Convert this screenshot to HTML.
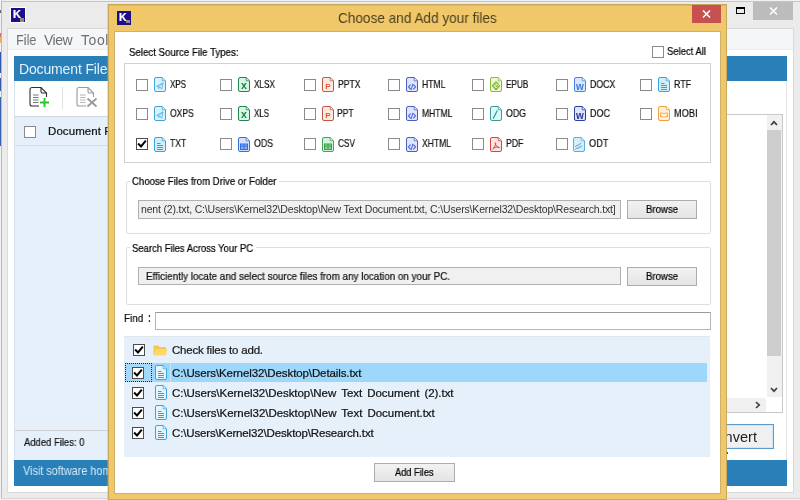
<!DOCTYPE html>
<html><head><meta charset="utf-8"><title>Choose and Add your files</title>
<style>
*{box-sizing:border-box;margin:0;padding:0}
html,body{width:800px;height:500px;overflow:hidden;background:#fff}
body{position:relative;font-family:"Liberation Sans",sans-serif;color:#000}
.a{position:absolute}
.t{position:absolute;white-space:pre;line-height:1;will-change:transform;-webkit-text-stroke:.22px currentColor}
.ic{position:absolute;overflow:visible;will-change:transform}
.cb{position:absolute;width:12px;height:12px;border:1px solid #8a8a8a;background:#fff}
.cb.dk{border-color:#4d4d4d}
.btn{position:absolute;border:1px solid #acacac;background:linear-gradient(#f2f2f2,#e4e4e4)}
.gb{position:absolute;border:1px solid #dedede;border-radius:2px}
.wh{position:absolute;background:#fff;height:4px}
</style></head><body>

<div class="a" style="left:1px;top:0;width:799px;height:500px;background:#ebebeb;border-left:1px solid #b9b9b9;border-top:1px solid #f0f0f0"></div>
<div class="a" style="left:1px;top:1px;width:799px;height:1px;background:#c6c6c6"></div>
<div class="a" style="left:1px;top:498px;width:799px;height:1px;background:#d6d6d6"></div><div class="a" style="left:1px;top:499px;width:799px;height:1px;background:#f4f4f4"></div>
<div class="a" style="left:0;top:0;width:1px;height:500px;background:#f2f2f2"></div><div class="a" style="left:0;top:10px;width:1px;height:3px;background:#666"></div><div class="a" style="left:0;top:33px;width:1px;height:4px;background:#d86a6a"></div><div class="a" style="left:0;top:37px;width:1px;height:6px;background:#e6b65e"></div><div class="a" style="left:0;top:52px;width:1px;height:21px;background:#3258a8"></div><div class="a" style="left:0;top:78px;width:1px;height:13px;background:#3258a8"></div><div class="a" style="left:0;top:97px;width:1px;height:49px;background:#3a62b0"></div>
<div class="a" style="left:10px;top:7px;width:16px;height:16px;background:#1b0f8e;border:1px solid #fff"><span class="t" id="t_k1" style="left:2px;top:1px;font-size:11px;font-weight:bold;color:#fff">K</span><span class="a" style="left:9px;top:10px;width:4px;height:4px;background:#b9a27a;opacity:.8"></span></div>
<svg class="a" style="left:736px;top:7px" width="9" height="7" viewBox="0 0 9 7"><rect x=".5" y=".5" width="8" height="6" fill="none" stroke="#000"/><rect x="0" y="0" width="9" height="2" fill="#000"/></svg>
<div class="a" style="left:753px;top:2px;width:40px;height:18px;background:#bcbcbc"></div>
<svg class="a" style="left:769px;top:7px" width="9" height="8" viewBox="0 0 9 8"><path d="M1 .5L8 7.5M8 .5L1 7.5" stroke="#fff" stroke-width="1.5"/></svg>
<div class="a" style="left:7px;top:28px;width:787px;height:465px;background:#fff;border:1px solid #dadada"></div>
<div class="a" style="left:8px;top:29px;width:785px;height:21px;background:#f5f6f7;border-bottom:1px solid #ececec"></div>
<span class="t" id="t_file" style="left:15.70px;top:32.65px;font-size:14px;color:#6e6e6e;transform:scaleX(0.9006);transform-origin:0 0;-webkit-text-stroke:0;">File</span>
<span class="t" id="t_view" style="left:44.20px;top:32.65px;font-size:14px;color:#6e6e6e;letter-spacing:-0.533px;-webkit-text-stroke:0;">View</span>
<span class="t" id="t_tool" style="left:81.00px;top:32.65px;font-size:14px;color:#6e6e6e;letter-spacing:0.577px;-webkit-text-stroke:0;">Tools</span>
<div class="a" style="left:14px;top:56px;width:773px;height:25px;background:#2980b9"></div>
<span class="t" id="t_docf" style="left:18.70px;top:61.85px;font-size:14px;color:#e4f1fa;letter-spacing:-0.144px;-webkit-text-stroke:0;">Document File</span>
<div class="a" style="left:14px;top:81px;width:773px;height:379px;border-left:1px solid #d9e2ec;border-right:1px solid #e3e3e3"></div>
<svg class="a" style="left:29px;top:86px" width="22" height="23" viewBox="0 0 22 23"><path d="M3 1.5H12L17.5 7V18a2 2 0 0 1-2 2H3A2 2 0 0 1 1 18V3.500A2 2 0 0 1 3 1.5Z" fill="#fff" stroke="#2e2e2e" stroke-width="1.1"/><path d="M12 1.500V5.500a1.500 1.500 0 0 0 1.500 1.500H17.500" fill="none" stroke="#2e2e2e" stroke-width="1.1"/><path d="M4 9H9.500M4 11.500H9.500M4 14H9.500M4 16.500H9.500" stroke="#777" stroke-width="1.1"/><rect x="10" y="11" width="11" height="11" fill="#fff"/><path d="M15.500 12V21M11 16.500H20" stroke="#25c825" stroke-width="1.9"/></svg>
<div class="a" style="left:62px;top:87px;width:1px;height:22px;background:#e2e2e2"></div>
<svg class="a" style="left:76px;top:86px" width="23" height="23" viewBox="0 0 23 23"><path d="M3 1.5H12L17.5 7V18a2 2 0 0 1-2 2H3A2 2 0 0 1 1 18V3.500A2 2 0 0 1 3 1.5Z" fill="#fff" stroke="#9a9a9a" stroke-width="1.1"/><path d="M12 1.500V5.500a1.500 1.500 0 0 0 1.500 1.500H17.500" fill="none" stroke="#9a9a9a" stroke-width="1.1"/><path d="M4 9H9.500M4 11.500H9.500M4 14H9.500M4 16.500H9.500" stroke="#b5b5b5" stroke-width="1.1"/><rect x="10" y="11" width="12" height="11" fill="#fff"/><path d="M11.500 12.500L20.500 20.500M20.500 12.500L11.500 20.500" stroke="#9a9a9a" stroke-width="1.8"/></svg>
<div class="a" style="left:15px;top:116px;width:100px;height:344px;background:#e6f0fb;border-top:1px solid #cfd6dd"></div>
<div class="a" style="left:15px;top:145px;width:100px;height:1px;background:#d6dde6"></div>
<div class="cb" style="left:24px;top:126px"></div>
<span class="t" id="t_docf2" style="left:47.50px;top:125.97px;font-size:11.5px;color:#111;letter-spacing:0.074px;">Document File</span>
<div class="a" style="left:15px;top:430px;width:100px;height:1px;background:#cfd3d8"></div>
<span class="t" id="t_added" style="left:24.00px;top:437.11px;font-size:10.5px;color:#111;transform:scaleX(0.9010);transform-origin:0 0;">Added Files: 0</span>
<div class="a" style="left:14px;top:460px;width:773px;height:26px;background:#2980b9"></div>
<span class="t" id="t_visit" style="left:22.80px;top:465.42px;font-size:12.5px;color:#d6e8f5;transform:scaleX(0.8678);transform-origin:0 0;-webkit-text-stroke:0;">Visit software home page</span>
<div class="a" style="left:600px;top:114px;width:183px;height:299px;background:#fff;border:1px solid #c9c9c9"></div>
<div class="a" style="left:767px;top:115px;width:15px;height:282px;background:#f0f0f0"></div>
<div class="a" style="left:767px;top:130px;width:14px;height:226px;background:#cdcdcd"></div>
<svg class="a" style="left:770px;top:120px" width="8" height="6" viewBox="0 0 8 6"><path d="M1 5L4 1.800 7 5" fill="none" stroke="#404040" stroke-width="1.7"/></svg>
<svg class="a" style="left:770px;top:387px" width="8" height="6" viewBox="0 0 8 6"><path d="M1 1L4 4.200 7 1" fill="none" stroke="#404040" stroke-width="1.7"/></svg>
<div class="a" style="left:601px;top:398px;width:165px;height:14px;background:#f0f0f0"></div>
<svg class="a" style="left:755px;top:401px" width="6" height="8" viewBox="0 0 6 8"><path d="M1 1L4.200 4 1 7" fill="none" stroke="#404040" stroke-width="1.7"/></svg>
<div class="a" style="left:690px;top:424px;width:84px;height:25px;background:#f0f0f0;border:1px solid #5a9bd0;box-shadow:inset 0 0 0 1px #cfe6f7"></div>
<span class="t" id="t_conv" style="left:706.00px;top:429.73px;font-size:14.5px;color:#222;letter-spacing:0.042px;-webkit-text-stroke:0;">Convert</span>
<div class="a" style="left:727px;top:452px;width:1px;height:2px;background:#555"></div>
<div class="a" style="left:108px;top:4px;width:619px;height:496px;background:#f0c869;border:1px solid #c8a85c;box-shadow:inset 0 1px 0 #dbb962,-1px 0 0 rgba(200,168,92,.35)"></div>
<div class="a" style="left:114px;top:31px;width:607px;height:463px;background:#fff;border:1px solid #cdb06a"></div>
<div class="a" style="left:117px;top:11px;width:14px;height:14px;background:#1b0f8e"><span class="t" id="t_k2" style="left:2px;top:1px;font-size:10.500px;font-weight:bold;color:#fff">K</span><span class="a" style="left:9px;top:9px;width:4px;height:3px;background:#b9a27a;opacity:.8"></span></div>
<span class="t" id="t_title" style="left:337.50px;top:11.03px;font-size:14.5px;color:#4a3f1f;transform:scaleX(0.9378);transform-origin:0 0;-webkit-text-stroke:0;">Choose and Add your files</span>
<div class="a" style="left:692px;top:5px;width:29px;height:18px;background:#c75050"></div>
<svg class="a" style="left:702px;top:10px" width="9" height="8" viewBox="0 0 9 8"><path d="M1 .5L8 7.5M8 .5L1 7.5" stroke="#fff" stroke-width="1.5"/></svg>
<span class="t" id="t_sel" style="left:128.50px;top:46.91px;font-size:10.5px;color:#000;transform:scaleX(0.9213);transform-origin:0 0;">Select Source File Types:</span>
<div class="cb" style="left:652px;top:46px"></div>
<span class="t" id="t_selall" style="left:667.00px;top:46.31px;font-size:10.5px;color:#000;transform:scaleX(0.9026);transform-origin:0 0;">Select All</span>
<div class="gb" style="left:124px;top:63px;width:587px;height:100px;border-color:#d2d2d2;border-radius:0"></div>
<div class="cb" style="left:136px;top:79px"></div>
<svg class="ic" style="left:154px;top:77px" width="12" height="15" viewBox="0 0 12 15"><path d="M2 .5H8.2L11.5 3.800V13a1.500 1.500 0 0 1-1.500 1.500H2A1.500 1.500 0 0 1 .5 13V2A1.500 1.500 0 0 1 2 .5Z" fill="#dbf1fb" stroke="#3fa7d6"/><path d="M8.2 1V3.800H11Z" fill="#fff" fill-opacity=".85"/><path d="M8.2 .8V3.800H11.300" fill="none" stroke="#3fa7d6" stroke-width=".8"/><path d="M2.6 9.3L9 5.9 7.7 12.2 6 10.1 4.7 11.6 4.8 9.9Z" fill="none" stroke="#55b5e2" stroke-width=".9" stroke-linejoin="round"/><path d="M4.8 9.9L9 5.9" stroke="#55b5e2" stroke-width=".7"/></svg>
<span class="t" id="t_XPS" style="left:170.00px;top:79.11px;font-size:10.5px;color:#111;transform:scaleX(0.7619);transform-origin:0 0;">XPS</span>
<div class="cb" style="left:220px;top:79px"></div>
<svg class="ic" style="left:238px;top:77px" width="12" height="15" viewBox="0 0 12 15"><path d="M2 .5H8.2L11.5 3.800V13a1.500 1.500 0 0 1-1.500 1.500H2A1.500 1.500 0 0 1 .5 13V2A1.500 1.500 0 0 1 2 .5Z" fill="#d6f5e2" stroke="#23844d"/><path d="M8.2 1V3.800H11Z" fill="#fff" fill-opacity=".85"/><path d="M8.2 .8V3.800H11.300" fill="none" stroke="#23844d" stroke-width=".8"/><text x="6" y="12.2" font-family="Liberation Sans, sans-serif" font-size="10.5" font-weight="bold" text-anchor="middle" fill="#1b7d43">x</text></svg>
<span class="t" id="t_XLSX" style="left:254.00px;top:79.11px;font-size:10.5px;color:#111;transform:scaleX(0.7828);transform-origin:0 0;">XLSX</span>
<div class="cb" style="left:304px;top:79px"></div>
<svg class="ic" style="left:322px;top:77px" width="12" height="15" viewBox="0 0 12 15"><path d="M2 .5H8.2L11.5 3.800V13a1.500 1.500 0 0 1-1.500 1.500H2A1.500 1.500 0 0 1 .5 13V2A1.500 1.500 0 0 1 2 .5Z" fill="#fde9e4" stroke="#c05a40"/><path d="M8.2 1V3.800H11Z" fill="#fff" fill-opacity=".85"/><path d="M8.2 .8V3.800H11.300" fill="none" stroke="#c05a40" stroke-width=".8"/><text x="6" y="12.2" font-family="Liberation Sans, sans-serif" font-size="8" font-weight="bold" text-anchor="middle" fill="#e2583c">P</text></svg>
<span class="t" id="t_PPTX" style="left:337.60px;top:79.11px;font-size:10.5px;color:#111;transform:scaleX(0.8174);transform-origin:0 0;">PPTX</span>
<div class="cb" style="left:388px;top:79px"></div>
<svg class="ic" style="left:406px;top:77px" width="12" height="15" viewBox="0 0 12 15"><path d="M2 .5H8.2L11.5 3.800V13a1.500 1.500 0 0 1-1.500 1.500H2A1.500 1.500 0 0 1 .5 13V2A1.500 1.500 0 0 1 2 .5Z" fill="#e0e5fb" stroke="#4a5fc4"/><path d="M8.2 1V3.800H11Z" fill="#fff" fill-opacity=".85"/><path d="M8.2 .8V3.800H11.300" fill="none" stroke="#4a5fc4" stroke-width=".8"/><path d="M4.4 7.8L2.4 9.9 4.4 12M7.6 7.8L9.6 9.9 7.6 12M6.8 7.2L5.2 12.6" fill="none" stroke="#4d6be0" stroke-width="1.1" stroke-linecap="round" stroke-linejoin="round"/></svg>
<span class="t" id="t_HTML" style="left:421.60px;top:79.11px;font-size:10.5px;color:#111;transform:scaleX(0.8193);transform-origin:0 0;">HTML</span>
<div class="cb" style="left:472px;top:79px"></div>
<svg class="ic" style="left:490px;top:77px" width="12" height="15" viewBox="0 0 12 15"><path d="M2 .5H8.2L11.5 3.800V13a1.500 1.500 0 0 1-1.500 1.500H2A1.500 1.500 0 0 1 .5 13V2A1.500 1.500 0 0 1 2 .5Z" fill="#eff8d2" stroke="#86ba3c"/><path d="M8.2 1V3.800H11Z" fill="#fff" fill-opacity=".85"/><path d="M8.2 .8V3.800H11.300" fill="none" stroke="#86ba3c" stroke-width=".8"/><path d="M8.3 6.900L6 4.900 2.500 8.700 6 12.500 9.600 8.700" fill="none" stroke="#7fb432" stroke-width="1.300" stroke-linejoin="round" stroke-linecap="round"/><path d="M4.800 8.700L6 7.500 7.100 8.700 6 9.900 8.200 7.600" fill="none" stroke="#7fb432" stroke-width="1" stroke-linejoin="round"/></svg>
<span class="t" id="t_EPUB" style="left:505.60px;top:79.11px;font-size:10.5px;color:#111;transform:scaleX(0.7829);transform-origin:0 0;">EPUB</span>
<div class="cb" style="left:556px;top:79px"></div>
<svg class="ic" style="left:574px;top:77px" width="12" height="15" viewBox="0 0 12 15"><path d="M2 .5H8.2L11.5 3.800V13a1.500 1.500 0 0 1-1.500 1.500H2A1.500 1.500 0 0 1 .5 13V2A1.500 1.500 0 0 1 2 .5Z" fill="#d8e7fc" stroke="#4a86e0"/><path d="M8.2 1V3.800H11Z" fill="#fff" fill-opacity=".85"/><path d="M8.2 .8V3.800H11.300" fill="none" stroke="#4a86e0" stroke-width=".8"/><text x="6" y="12.6" font-family="Liberation Sans, sans-serif" font-size="10" font-weight="bold" text-anchor="middle" fill="#3b78d8">w</text></svg>
<span class="t" id="t_DOCX" style="left:589.60px;top:79.11px;font-size:10.5px;color:#111;transform:scaleX(0.8370);transform-origin:0 0;">DOCX</span>
<div class="cb" style="left:640px;top:79px"></div>
<svg class="ic" style="left:658px;top:77px" width="12" height="15" viewBox="0 0 12 15"><path d="M2 .5H8.2L11.5 3.800V13a1.500 1.500 0 0 1-1.500 1.500H2A1.500 1.500 0 0 1 .5 13V2A1.500 1.500 0 0 1 2 .5Z" fill="#d2eefb" stroke="#38a6de"/><path d="M8.2 1V3.800H11Z" fill="#fff" fill-opacity=".85"/><path d="M8.2 .8V3.800H11.300" fill="none" stroke="#38a6de" stroke-width=".8"/><path d="M3 6.5H6.5M3 8.5H9M3 10.5H9M3 12.5H9" stroke="#3a9bd5" stroke-width="1"/></svg>
<span class="t" id="t_RTF" style="left:674.00px;top:79.11px;font-size:10.5px;color:#111;transform:scaleX(0.8411);transform-origin:0 0;">RTF</span>
<div class="cb" style="left:136px;top:108px"></div>
<svg class="ic" style="left:154px;top:106px" width="12" height="15" viewBox="0 0 12 15"><path d="M2 .5H8.2L11.5 3.800V13a1.500 1.500 0 0 1-1.500 1.500H2A1.500 1.500 0 0 1 .5 13V2A1.500 1.500 0 0 1 2 .5Z" fill="#dbf1fb" stroke="#3fa7d6"/><path d="M8.2 1V3.800H11Z" fill="#fff" fill-opacity=".85"/><path d="M8.2 .8V3.800H11.300" fill="none" stroke="#3fa7d6" stroke-width=".8"/><path d="M2.6 9.3L9 5.9 7.7 12.2 6 10.1 4.7 11.6 4.8 9.9Z" fill="none" stroke="#55b5e2" stroke-width=".9" stroke-linejoin="round"/><path d="M4.8 9.9L9 5.9" stroke="#55b5e2" stroke-width=".7"/></svg>
<span class="t" id="t_OXPS" style="left:170.00px;top:108.11px;font-size:10.5px;color:#111;transform:scaleX(0.8085);transform-origin:0 0;">OXPS</span>
<div class="cb" style="left:220px;top:108px"></div>
<svg class="ic" style="left:238px;top:106px" width="12" height="15" viewBox="0 0 12 15"><path d="M2 .5H8.2L11.5 3.800V13a1.500 1.500 0 0 1-1.500 1.500H2A1.500 1.500 0 0 1 .5 13V2A1.500 1.500 0 0 1 2 .5Z" fill="#d6f5e2" stroke="#23844d"/><path d="M8.2 1V3.800H11Z" fill="#fff" fill-opacity=".85"/><path d="M8.2 .8V3.800H11.300" fill="none" stroke="#23844d" stroke-width=".8"/><text x="6" y="12.2" font-family="Liberation Sans, sans-serif" font-size="10.5" font-weight="bold" text-anchor="middle" fill="#1b7d43">x</text></svg>
<span class="t" id="t_XLS" style="left:254.00px;top:108.11px;font-size:10.5px;color:#111;transform:scaleX(0.7559);transform-origin:0 0;">XLS</span>
<div class="cb" style="left:304px;top:108px"></div>
<svg class="ic" style="left:322px;top:106px" width="12" height="15" viewBox="0 0 12 15"><path d="M2 .5H8.2L11.5 3.800V13a1.500 1.500 0 0 1-1.500 1.500H2A1.500 1.500 0 0 1 .5 13V2A1.500 1.500 0 0 1 2 .5Z" fill="#fde9e4" stroke="#c05a40"/><path d="M8.2 1V3.800H11Z" fill="#fff" fill-opacity=".85"/><path d="M8.2 .8V3.800H11.300" fill="none" stroke="#c05a40" stroke-width=".8"/><text x="6" y="12.2" font-family="Liberation Sans, sans-serif" font-size="8" font-weight="bold" text-anchor="middle" fill="#e2583c">P</text></svg>
<span class="t" id="t_PPT" style="left:337.00px;top:108.11px;font-size:10.5px;color:#111;transform:scaleX(0.8128);transform-origin:0 0;">PPT</span>
<div class="cb" style="left:388px;top:108px"></div>
<svg class="ic" style="left:406px;top:106px" width="12" height="15" viewBox="0 0 12 15"><path d="M2 .5H8.2L11.5 3.800V13a1.500 1.500 0 0 1-1.500 1.500H2A1.500 1.500 0 0 1 .5 13V2A1.500 1.500 0 0 1 2 .5Z" fill="#e0e5fb" stroke="#4a5fc4"/><path d="M8.2 1V3.800H11Z" fill="#fff" fill-opacity=".85"/><path d="M8.2 .8V3.800H11.300" fill="none" stroke="#4a5fc4" stroke-width=".8"/><path d="M4.4 7.8L2.4 9.9 4.4 12M7.6 7.8L9.6 9.9 7.6 12M6.8 7.2L5.2 12.6" fill="none" stroke="#4d6be0" stroke-width="1.1" stroke-linecap="round" stroke-linejoin="round"/></svg>
<span class="t" id="t_MHTML" style="left:421.60px;top:108.11px;font-size:10.5px;color:#111;transform:scaleX(0.8144);transform-origin:0 0;">MHTML</span>
<div class="cb" style="left:472px;top:108px"></div>
<svg class="ic" style="left:490px;top:106px" width="12" height="15" viewBox="0 0 12 15"><path d="M2 .5H8.2L11.5 3.800V13a1.500 1.500 0 0 1-1.500 1.500H2A1.500 1.500 0 0 1 .5 13V2A1.500 1.500 0 0 1 2 .5Z" fill="#ddf8f6" stroke="#3a9c98"/><path d="M8.2 1V3.800H11Z" fill="#fff" fill-opacity=".85"/><path d="M8.2 .8V3.800H11.300" fill="none" stroke="#3a9c98" stroke-width=".8"/><path d="M3.4 12.2L7 5" stroke="#2f9a94" stroke-width="1.2" stroke-linecap="round"/></svg>
<span class="t" id="t_ODG" style="left:505.60px;top:108.11px;font-size:10.5px;color:#111;transform:scaleX(0.8354);transform-origin:0 0;">ODG</span>
<div class="cb" style="left:556px;top:108px"></div>
<svg class="ic" style="left:574px;top:106px" width="12" height="15" viewBox="0 0 12 15"><path d="M2 .5H8.2L11.5 3.800V13a1.500 1.500 0 0 1-1.500 1.500H2A1.500 1.500 0 0 1 .5 13V2A1.500 1.500 0 0 1 2 .5Z" fill="#dde4fb" stroke="#2b3f9e"/><path d="M8.2 1V3.800H11Z" fill="#fff" fill-opacity=".85"/><path d="M8.2 .8V3.800H11.300" fill="none" stroke="#2b3f9e" stroke-width=".8"/><text x="6" y="12.6" font-family="Liberation Sans, sans-serif" font-size="10" font-weight="bold" text-anchor="middle" fill="#27389a">w</text></svg>
<span class="t" id="t_DOC" style="left:589.60px;top:108.11px;font-size:10.5px;color:#111;transform:scaleX(0.8580);transform-origin:0 0;">DOC</span>
<div class="cb" style="left:640px;top:108px"></div>
<svg class="ic" style="left:658px;top:106px" width="12" height="15" viewBox="0 0 12 15"><path d="M2 .5H8.2L11.5 3.800V13a1.500 1.500 0 0 1-1.500 1.500H2A1.500 1.500 0 0 1 .5 13V2A1.500 1.500 0 0 1 2 .5Z" fill="#fef1de" stroke="#f0a040"/><path d="M8.2 1V3.800H11Z" fill="#fff" fill-opacity=".85"/><path d="M8.2 .8V3.800H11.300" fill="none" stroke="#f0a040" stroke-width=".8"/><path d="M2.6 7.2C4 6.6 5.2 7 6 8 6.8 7 8 6.6 9.4 7.2V10.6C8 10.2 6.8 10.6 6 11.6 5.2 10.6 4 10.2 2.6 10.6Z" fill="none" stroke="#f0a040" stroke-width="1" stroke-linejoin="round"/></svg>
<span class="t" id="t_MOBI" style="left:673.50px;top:108.11px;font-size:10.5px;color:#111;transform:scaleX(0.8760);transform-origin:0 0;">MOBI</span>
<div class="cb dk" style="left:136px;top:138px"><svg width="10" height="10" viewBox="0 0 10 10" style="position:absolute;left:0;top:0"><path d="M1.8 5.2L4 7.4 8.2 2.4" fill="none" stroke="#000" stroke-width="2" stroke-linecap="square"/></svg></div>
<svg class="ic" style="left:154px;top:137px" width="12" height="15" viewBox="0 0 12 15"><path d="M2 .5H8.2L11.5 3.800V13a1.500 1.500 0 0 1-1.500 1.500H2A1.500 1.500 0 0 1 .5 13V2A1.500 1.500 0 0 1 2 .5Z" fill="#d2eefb" stroke="#38a6de"/><path d="M8.2 1V3.800H11Z" fill="#fff" fill-opacity=".85"/><path d="M8.2 .8V3.800H11.300" fill="none" stroke="#38a6de" stroke-width=".8"/><path d="M3 6.5H6.5M3 8.5H9M3 10.5H9M3 12.5H9" stroke="#3a9bd5" stroke-width="1"/></svg>
<span class="t" id="t_TXT" style="left:170.00px;top:138.41px;font-size:10.5px;color:#111;transform:scaleX(0.8062);transform-origin:0 0;">TXT</span>
<div class="cb" style="left:220px;top:138px"></div>
<svg class="ic" style="left:238px;top:137px" width="12" height="15" viewBox="0 0 12 15"><path d="M2 .5H8.2L11.5 3.800V13a1.500 1.500 0 0 1-1.500 1.500H2A1.500 1.500 0 0 1 .5 13V2A1.500 1.500 0 0 1 2 .5Z" fill="#d2e1fc" stroke="#3a70d0"/><path d="M8.2 1V3.800H11Z" fill="#fff" fill-opacity=".85"/><path d="M8.2 .8V3.800H11.300" fill="none" stroke="#3a70d0" stroke-width=".8"/><rect x="2.5" y="7" width="7" height="5.5" fill="#2f6fe0" fill-opacity=".45" stroke="#2f6fe0" stroke-width="1"/><path d="M2.5 9.2H9.5M6 7V12.5" stroke="#2f6fe0" stroke-width=".9"/></svg>
<span class="t" id="t_ODS" style="left:254.00px;top:138.41px;font-size:10.5px;color:#111;transform:scaleX(0.8358);transform-origin:0 0;">ODS</span>
<div class="cb" style="left:304px;top:138px"></div>
<svg class="ic" style="left:322px;top:137px" width="12" height="15" viewBox="0 0 12 15"><path d="M2 .5H8.2L11.5 3.800V13a1.500 1.500 0 0 1-1.500 1.500H2A1.500 1.500 0 0 1 .5 13V2A1.500 1.500 0 0 1 2 .5Z" fill="#d5f2db" stroke="#3fa65a"/><path d="M8.2 1V3.800H11Z" fill="#fff" fill-opacity=".85"/><path d="M8.2 .8V3.800H11.300" fill="none" stroke="#3fa65a" stroke-width=".8"/><rect x="2.5" y="7" width="7" height="5.5" fill="#3aa050" fill-opacity=".45" stroke="#3aa050" stroke-width="1"/><path d="M2.5 9.2H9.5M6 7V12.5" stroke="#3aa050" stroke-width=".9"/></svg>
<span class="t" id="t_CSV" style="left:338.00px;top:138.41px;font-size:10.5px;color:#111;transform:scaleX(0.7879);transform-origin:0 0;">CSV</span>
<div class="cb" style="left:388px;top:138px"></div>
<svg class="ic" style="left:406px;top:137px" width="12" height="15" viewBox="0 0 12 15"><path d="M2 .5H8.2L11.5 3.800V13a1.500 1.500 0 0 1-1.500 1.500H2A1.500 1.500 0 0 1 .5 13V2A1.500 1.500 0 0 1 2 .5Z" fill="#e0e5fb" stroke="#4a5fc4"/><path d="M8.2 1V3.800H11Z" fill="#fff" fill-opacity=".85"/><path d="M8.2 .8V3.800H11.300" fill="none" stroke="#4a5fc4" stroke-width=".8"/><path d="M4.4 7.8L2.4 9.9 4.4 12M7.6 7.8L9.6 9.9 7.6 12M6.8 7.2L5.2 12.6" fill="none" stroke="#4d6be0" stroke-width="1.1" stroke-linecap="round" stroke-linejoin="round"/></svg>
<span class="t" id="t_XHTML" style="left:421.60px;top:138.41px;font-size:10.5px;color:#111;transform:scaleX(0.8147);transform-origin:0 0;">XHTML</span>
<div class="cb" style="left:472px;top:138px"></div>
<svg class="ic" style="left:490px;top:137px" width="12" height="15" viewBox="0 0 12 15"><path d="M2 .5H8.2L11.5 3.800V13a1.500 1.500 0 0 1-1.500 1.500H2A1.500 1.500 0 0 1 .5 13V2A1.500 1.500 0 0 1 2 .5Z" fill="#fde4e1" stroke="#d0483c"/><path d="M8.2 1V3.800H11Z" fill="#fff" fill-opacity=".85"/><path d="M8.2 .8V3.800H11.300" fill="none" stroke="#d0483c" stroke-width=".8"/><path d="M5.3 5.6C6.4 5.4 5.8 8.2 3 12.2M5.2 6.6C5.8 8.8 7.4 10.4 9.2 10.6M3.2 11.4C5 10 7.6 9.6 9.2 10.4" fill="none" stroke="#d8443a" stroke-width=".95" stroke-linecap="round"/></svg>
<span class="t" id="t_PDF" style="left:505.60px;top:138.41px;font-size:10.5px;color:#111;transform:scaleX(0.8286);transform-origin:0 0;">PDF</span>
<div class="cb" style="left:556px;top:138px"></div>
<svg class="ic" style="left:573px;top:137px" width="12" height="15" viewBox="0 0 12 15"><path d="M2 .5H8.2L11.5 3.800V13a1.500 1.500 0 0 1-1.500 1.500H2A1.500 1.500 0 0 1 .5 13V2A1.500 1.500 0 0 1 2 .5Z" fill="#d6edfb" stroke="#5aaee0"/><path d="M8.2 1V3.800H11Z" fill="#fff" fill-opacity=".85"/><path d="M8.2 .8V3.800H11.300" fill="none" stroke="#5aaee0" stroke-width=".8"/><path d="M2.6 9.2C4 7.6 4.6 9 5.6 8 6.4 7.2 7 7.4 7.8 6.4M2.6 12C4 10.4 4.8 11.8 5.8 10.6 6.6 9.8 7.4 10.2 8.6 9.2" fill="none" stroke="#3a90c8" stroke-width=".95" stroke-linecap="round"/></svg>
<span class="t" id="t_ODT" style="left:588.60px;top:138.41px;font-size:10.5px;color:#111;transform:scaleX(0.8756);transform-origin:0 0;">ODT</span>
<div class="gb" style="left:126px;top:181px;width:585px;height:53px"></div>
<div class="wh" style="left:130px;top:179px;width:149px"></div>
<span class="t" id="t_choose" style="left:132.00px;top:176.11px;font-size:10.5px;color:#000;transform:scaleX(0.9165);transform-origin:0 0;">Choose Files from Drive or Folder</span>
<div class="a" style="left:138px;top:200px;width:483px;height:19px;background:#f0f0f0;border:1px solid #b0b0b0"></div>
<span class="t" id="t_paths" style="left:141.00px;top:204.11px;font-size:10.5px;color:#333;letter-spacing:-0.169px;-webkit-text-stroke:0;">nent (2).txt, C:\Users\Kernel32\Desktop\New Text Document.txt, C:\Users\Kernel32\Desktop\Research.txt]</span>
<div class="btn" style="left:627px;top:200px;width:70px;height:19px"></div>
<span class="t" id="t_br1" style="left:646.00px;top:204.11px;font-size:10.5px;color:#000;transform:scaleX(0.9138);transform-origin:0 0;">Browse</span>
<div class="gb" style="left:126px;top:247px;width:585px;height:58px"></div>
<div class="wh" style="left:130px;top:245px;width:126px"></div>
<span class="t" id="t_search" style="left:132.00px;top:242.61px;font-size:10.5px;color:#000;transform:scaleX(0.9014);transform-origin:0 0;">Search Files Across Your PC</span>
<div class="a" style="left:138px;top:267px;width:483px;height:18px;background:#f0f0f0;border:1px solid #b0b0b0"></div>
<span class="t" id="t_eff" style="left:146.00px;top:271.11px;font-size:10.5px;color:#111;transform:scaleX(0.9391);transform-origin:0 0;">Efficiently locate and select source files from any location on your PC.</span>
<div class="btn" style="left:627px;top:267px;width:70px;height:19px"></div>
<span class="t" id="t_br2" style="left:646.00px;top:271.11px;font-size:10.5px;color:#000;transform:scaleX(0.9138);transform-origin:0 0;">Browse</span>
<span class="t" id="t_find" style="left:124.30px;top:313.27px;font-size:11.5px;color:#111;transform:scaleX(0.8629);transform-origin:0 0;">Find</span>
<span class="t" id="t_findc" style="left:148.20px;top:312.42px;font-size:12.5px;color:#111;font-weight:bold;transform:scaleX(0.6209);transform-origin:0 0;">:</span>
<div class="a" style="left:155px;top:312px;width:556px;height:18px;background:#fff;border:1px solid #b5b5b5;border-top-color:#9a9a9a"></div>
<div class="a" style="left:124px;top:336px;width:586px;height:121px;background:#e6f0fb;border-top:1px solid #dfe6ee"></div>
<div class="a" style="left:125px;top:363px;width:582px;height:19px;background:#9dd8fc"></div>
<div class="a" style="left:170px;top:363px;width:1px;height:19px;background:#c4e7fd"></div>
<div class="a" style="left:125px;top:363px;width:27px;height:19px;border:1px dotted #222;background:#a3dafc"></div>
<div class="cb dk" style="left:133px;top:344px"><svg width="10" height="10" viewBox="0 0 10 10" style="position:absolute;left:0;top:0"><path d="M1.8 5.2L4 7.4 8.2 2.4" fill="none" stroke="#000" stroke-width="2" stroke-linecap="square"/></svg></div>
<svg class="a" style="left:153px;top:345px" width="15" height="11" viewBox="0 0 15 11"><path d="M.5 1.500A1 1 0 0 1 1.500 .5H5L6.500 2H12A1 1 0 0 1 13 3V10H.5Z" fill="#f5c648"/><path d="M2.500 4H14.500L12.800 10.500H.5Z" fill="#fbd869"/></svg>
<span class="t" id="t_check" style="left:172.00px;top:345.27px;font-size:11.5px;color:#1a1a1a;letter-spacing:-0.199px;">Check files to add.</span>
<div class="cb dk" style="left:132px;top:367px"><svg width="10" height="10" viewBox="0 0 10 10" style="position:absolute;left:0;top:0"><path d="M1.8 5.2L4 7.4 8.2 2.4" fill="none" stroke="#000" stroke-width="2" stroke-linecap="square"/></svg></div>
<svg class="ic" style="left:155px;top:365px" width="12" height="15" viewBox="0 0 12 15"><path d="M2 .5H8.2L11.5 3.800V13a1.500 1.500 0 0 1-1.500 1.500H2A1.500 1.500 0 0 1 .5 13V2A1.500 1.500 0 0 1 2 .5Z" fill="#e4f5fd" stroke="#38a6de"/><path d="M8.2 1V3.800H11Z" fill="#fff" fill-opacity=".85"/><path d="M8.2 .8V3.800H11.300" fill="none" stroke="#38a6de" stroke-width=".8"/><path d="M3 6.5H6.5M3 8.5H9M3 10.5H9M3 12.5H9" stroke="#3a9bd5" stroke-width="1"/></svg>
<span class="t" id="t_row0" style="left:172.00px;top:367.77px;font-size:11.5px;color:#111;letter-spacing:-0.101px;">C:\Users\Kernel32\Desktop\Details.txt</span>
<div class="cb dk" style="left:132px;top:387px"><svg width="10" height="10" viewBox="0 0 10 10" style="position:absolute;left:0;top:0"><path d="M1.8 5.2L4 7.4 8.2 2.4" fill="none" stroke="#000" stroke-width="2" stroke-linecap="square"/></svg></div>
<svg class="ic" style="left:155px;top:385px" width="12" height="15" viewBox="0 0 12 15"><path d="M2 .5H8.2L11.5 3.800V13a1.500 1.500 0 0 1-1.500 1.500H2A1.500 1.500 0 0 1 .5 13V2A1.500 1.500 0 0 1 2 .5Z" fill="#e4f5fd" stroke="#38a6de"/><path d="M8.2 1V3.800H11Z" fill="#fff" fill-opacity=".85"/><path d="M8.2 .8V3.800H11.300" fill="none" stroke="#38a6de" stroke-width=".8"/><path d="M3 6.5H6.5M3 8.5H9M3 10.5H9M3 12.5H9" stroke="#3a9bd5" stroke-width="1"/></svg>
<span class="t" id="t_row1" style="left:172.00px;top:387.77px;font-size:11.5px;color:#111;letter-spacing:-0.045px;word-spacing:2px;">C:\Users\Kernel32\Desktop\New Text Document (2).txt</span>
<div class="cb dk" style="left:132px;top:407px"><svg width="10" height="10" viewBox="0 0 10 10" style="position:absolute;left:0;top:0"><path d="M1.8 5.2L4 7.4 8.2 2.4" fill="none" stroke="#000" stroke-width="2" stroke-linecap="square"/></svg></div>
<svg class="ic" style="left:155px;top:405px" width="12" height="15" viewBox="0 0 12 15"><path d="M2 .5H8.2L11.5 3.800V13a1.500 1.500 0 0 1-1.500 1.500H2A1.500 1.500 0 0 1 .5 13V2A1.500 1.500 0 0 1 2 .5Z" fill="#e4f5fd" stroke="#38a6de"/><path d="M8.2 1V3.800H11Z" fill="#fff" fill-opacity=".85"/><path d="M8.2 .8V3.800H11.300" fill="none" stroke="#38a6de" stroke-width=".8"/><path d="M3 6.5H6.5M3 8.5H9M3 10.5H9M3 12.5H9" stroke="#3a9bd5" stroke-width="1"/></svg>
<span class="t" id="t_row2" style="left:172.00px;top:407.77px;font-size:11.5px;color:#111;letter-spacing:-0.039px;word-spacing:2px;">C:\Users\Kernel32\Desktop\New Text Document.txt</span>
<div class="cb dk" style="left:132px;top:427px"><svg width="10" height="10" viewBox="0 0 10 10" style="position:absolute;left:0;top:0"><path d="M1.8 5.2L4 7.4 8.2 2.4" fill="none" stroke="#000" stroke-width="2" stroke-linecap="square"/></svg></div>
<svg class="ic" style="left:155px;top:425px" width="12" height="15" viewBox="0 0 12 15"><path d="M2 .5H8.2L11.5 3.800V13a1.500 1.500 0 0 1-1.500 1.500H2A1.500 1.500 0 0 1 .5 13V2A1.500 1.500 0 0 1 2 .5Z" fill="#e4f5fd" stroke="#38a6de"/><path d="M8.2 1V3.800H11Z" fill="#fff" fill-opacity=".85"/><path d="M8.2 .8V3.800H11.300" fill="none" stroke="#38a6de" stroke-width=".8"/><path d="M3 6.5H6.5M3 8.5H9M3 10.5H9M3 12.5H9" stroke="#3a9bd5" stroke-width="1"/></svg>
<span class="t" id="t_row3" style="left:172.00px;top:427.77px;font-size:11.5px;color:#111;letter-spacing:-0.146px;">C:\Users\Kernel32\Desktop\Research.txt</span>
<div class="btn" style="left:374px;top:463px;width:81px;height:19px"></div>
<span class="t" id="t_add" style="left:395.00px;top:466.71px;font-size:10.5px;color:#000;transform:scaleX(0.8816);transform-origin:0 0;">Add Files</span>
</body></html>
